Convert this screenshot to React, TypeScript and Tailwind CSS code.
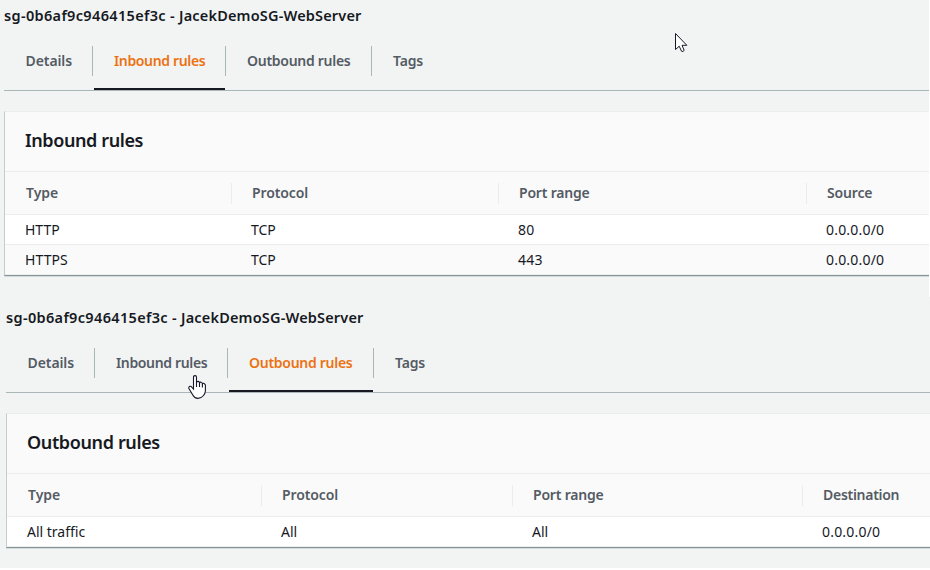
import React from "react";

type Cell = { text: string; spacing: string };
type Column = { label: Cell; width: string; values: Cell[] };
type Tab = { label: Cell; width: string; active?: boolean };

function Tabs({ tabs }: { tabs: Tab[] }) {
  return (
    <nav className="flex h-[59px] border-b border-[#aab7b8] text-[14px] font-semibold leading-5 text-[#545b64]">
      {tabs.map((tab, i) => (
        <div key={tab.label.text} className={`flex h-[58px] shrink-0 flex-col pt-[14px] ${tab.width}`}>
          <div className={`flex h-[30px] items-center pl-[21px] whitespace-nowrap ${i < tabs.length - 1 ? "border-r border-[#aab7b8]" : ""}`}>
            <span className={`${tab.label.spacing} ${tab.active ? "text-[#ec7211]" : ""}`}>{tab.label.text}</span>
          </div>
          {tab.active && <div className="mt-[12px] mr-px ml-px h-[2px] bg-[#16191f]" />}
        </div>
      ))}
    </nav>
  );
}

function RulesCard({ title, columns }: { title: Cell; columns: Column[] }) {
  const rows = columns[0].values.map((_, r) => columns.map((c) => ({ ...c.values[r], width: c.width })));
  return (
    <section className="mt-5 border-t border-b border-l border-t-[#eaeded] border-b-[#879596] border-l-[#c5cccc] bg-[#fafafa] shadow-[0_1px_0_0_#d5dbdb]">
      <h2 className="flex h-[60px] items-center border-b border-[#eaeded] pb-[2px] pl-5 text-[18px] font-semibold text-[#16191f]">
        <span className={title.spacing}>{title.text}</span>
      </h2>
      <div className="flex h-[43px] items-center border-b border-[#eaeded] text-[14px] font-semibold text-[#545b64]">
        {columns.map((c, i) => (
          <div key={c.label.text} className={`flex h-[21px] shrink-0 items-center pb-[2px] whitespace-nowrap ${i ? "pl-5" : "pl-[21px]"} ${c.width} ${i < columns.length - 1 ? "border-r border-[#eaeded]" : ""}`}>
            <span className={c.label.spacing}>{c.label.text}</span>
          </div>
        ))}
      </div>
      {rows.map((row, r) => (
        <div key={r} className={`flex h-[30px] items-center border-b border-[#eaeded] text-[14px] text-[#16191f] ${r % 2 ? "bg-[#fafafa]" : "bg-white"}`}>
          {row.map((cell, i) => (
            <div key={i} className={`shrink-0 whitespace-nowrap ${i ? "pl-[19px]" : "pl-5"} ${cell.width}`}>
              <span className={cell.spacing}>{cell.text}</span>
            </div>
          ))}
        </div>
      ))}
    </section>
  );
}

function Heading() {
  return (
    <h1 className="flex h-8 items-center text-[14.5px] font-semibold text-[#16191f]">
      <span className="whitespace-pre">
        <span className="tracking-[0.34px]">sg-0b6af9c946415ef3c</span>
        <span className="tracking-[0.3px]"> - </span>
        <span className="tracking-[0.17px]">JacekDemoSG-WebServer</span>
      </span>
    </h1>
  );
}

const t = (text: string, spacing = "tracking-normal"): Cell => ({ text, spacing });

export default function App() {
  return (
    <main className="relative h-[570px] w-[930px] overflow-hidden bg-white font-['Noto_Sans',sans-serif]">
      <div className="mr-px h-[297px] bg-[#f2f4f4] pl-1">
        <Heading />
        <Tabs
          tabs={[
            { label: t("Details", "ml-[0.6px] tracking-[-0.1px]"), width: "w-[89px]" },
            { label: t("Inbound rules", "tracking-[-0.35px]"), width: "w-[133px]", active: true },
            { label: t("Outbound rules", "tracking-[-0.28px]"), width: "w-[146px]" },
            { label: t("Tags", "tracking-[-0.2px]"), width: "w-[80px]" },
          ]}
        />
        <RulesCard
          title={t("Inbound rules", "tracking-[-0.4px]")}
          columns={[
            { label: t("Type"), width: "w-[227px]", values: [t("HTTP"), t("HTTPS", "tracking-[0.1px]")] },
            { label: t("Protocol", "tracking-[-0.1px]"), width: "w-[267px]", values: [t("TCP"), t("TCP")] },
            { label: t("Port range", "tracking-[-0.2px]"), width: "w-[308px]", values: [t("80", "tracking-[0.2px]"), t("443", "tracking-[0.2px]")] },
            { label: t("Source", "tracking-[-0.15px]"), width: "w-[122px]", values: [t("0.0.0.0/0", "tracking-[0.2px]"), t("0.0.0.0/0", "tracking-[0.2px]")] },
          ]}
        />
      </div>
      <div className="h-[271px] bg-[#f2f4f4] pt-[5px] pl-[6px]">
        <Heading />
        <Tabs
          tabs={[
            { label: t("Details", "ml-[0.6px] tracking-[-0.1px]"), width: "w-[89px]" },
            { label: t("Inbound rules", "tracking-[-0.35px]"), width: "w-[133px]" },
            { label: t("Outbound rules", "tracking-[-0.28px]"), width: "w-[146px]", active: true },
            { label: t("Tags", "tracking-[-0.2px]"), width: "w-[80px]" },
          ]}
        />
        <RulesCard
          title={t("Outbound rules", "tracking-[-0.37px]")}
          columns={[
            { label: t("Type"), width: "w-[255px]", values: [t("All traffic")] },
            { label: t("Protocol", "tracking-[-0.1px]"), width: "w-[251px]", values: [t("All")] },
            { label: t("Port range", "tracking-[-0.2px]"), width: "w-[290px]", values: [t("All")] },
            { label: t("Destination", "tracking-[-0.28px]"), width: "w-[127px]", values: [t("0.0.0.0/0", "tracking-[0.2px]")] },
          ]}
        />
      </div>
      <svg className="absolute top-[33px] left-[675px]" width="13" height="20" viewBox="0 0 13 20">
        <path d="M.5.5V16.5L4.2 13.2L6.6 18.3Q8 19 9.2 17.4L7 12.3H11.8Z" fill="white" stroke="#16162a" strokeWidth="1" />
      </svg>
      <svg className="absolute top-[375px] left-[188px]" width="19" height="25" viewBox="0 0 19 25">
        <path d="M5.5 14V2.2Q5.5.6 7 .6T8.5 2.2V7.5Q8.7 6.4 10 6.4T11.5 8Q12 7 13.1 7.2T14.4 8.8Q15 8 16 8.4T17.4 10V16Q17.2 18.5 15.5 20.5Q13 23.5 9.8 23.4Q6.5 23.3 4.8 20L.9 13.5Q.4 12 1.6 11.4Q3 11 4 12.3Z" fill="white" stroke="#16162a" strokeWidth="1.1" />
        <path d="M8.5 7V12M11.5 8V12M14.4 9V12.5" fill="none" stroke="#16162a" strokeWidth="1.1" />
      </svg>
    </main>
  );
}
